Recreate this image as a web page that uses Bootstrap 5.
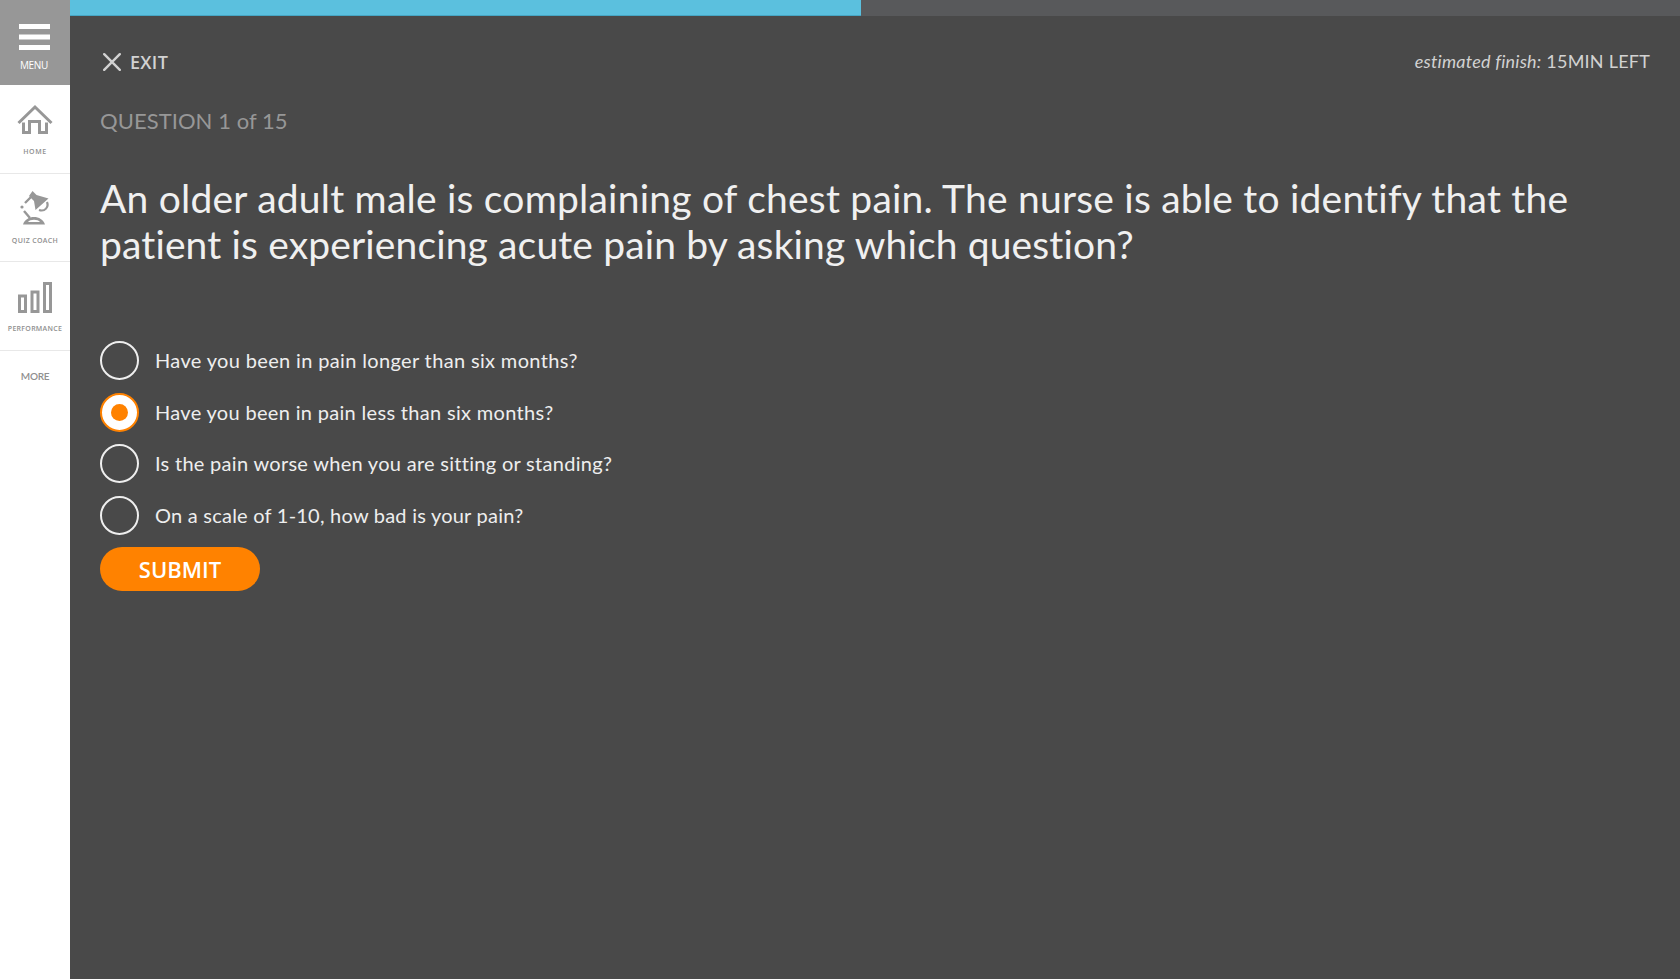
<!DOCTYPE html>
<html lang="en">
<head>
<meta charset="utf-8">
<title>Quiz Coach</title>
<link href="https://cdn.jsdelivr.net/npm/bootstrap@5.3.0/dist/css/bootstrap.min.css" rel="stylesheet">
<style>
body{font-family:"Open Sans",sans-serif;background:#494949;color:#eee;line-height:1}
.side{width:70px;background:#fff;color:#8f8f8f;font-weight:600}
.side a{color:inherit}
.side svg{display:block}
.menu-btn{height:85px;padding:24px 2px 0 0;background:#979797;color:#fff!important;font-size:10px;font-weight:400;letter-spacing:-.3px}
.menu-btn span{line-height:12px;margin-top:9px}
.tile{border-bottom:1px solid #e8e8e8;font-size:7px;white-space:nowrap}
.tile span{line-height:10px}
.more{font-family:Lato,sans-serif;font-size:10px;letter-spacing:-.3px;line-height:12px;padding-top:19px}
.prog{height:16px;border-radius:0;background:#58595b}
.prog .progress-bar{background:#5bc0de;border-bottom:1px solid #46a6c4}
.main-pane{padding:0 30px}
.topline{height:24px;margin-top:34px;color:#d2d2d2;font-size:18px}
.exit{font-weight:600;color:#d2d2d2;gap:9px;padding-left:3px;letter-spacing:.3px}
.left,.count,.ask,.opts{font-family:Lato,sans-serif;font-weight:400}
.left{letter-spacing:.22px;margin-bottom:2px}
.count{font-size:22px;line-height:30px;margin-top:32px;color:#979797;letter-spacing:.06px}
.ask{font-size:39px;line-height:46px;margin:39px 0 0;color:#f0f0f0;white-space:nowrap}
.ask .l1{letter-spacing:.22px}.ask .l2{letter-spacing:.14px}
.opts{margin-top:74px;gap:12.5px;font-size:20px}
.opt{gap:16px;height:39px;letter-spacing:.35px}
.opt .txt{margin-bottom:1px}
.opt:nth-child(3){letter-spacing:.29px}
.opt:nth-child(2){letter-spacing:.32px}
.opt:nth-child(4){letter-spacing:.23px}
.ring{width:39px;height:39px;border:2px solid #eee;border-radius:50%}
.ring.on{border-color:#ff8200;background:#fff}
.ring.on i{width:17px;height:17px;border-radius:50%;background:#ff8200}
.submit{width:160px;height:44px;margin-top:12.5px;border:0;border-radius:22px;background:#ff8200;color:#fff;font-size:22px;font-weight:600;line-height:1;padding:0}
.submit:hover{background:#ff8200;color:#fff}
</style>
<script src="https://cdn.jsdelivr.net/npm/bootstrap@5.3.0/dist/js/bootstrap.bundle.min.js"></script>
</head>
<body>
<div class="d-flex vh-100 overflow-hidden">
<nav class="side d-flex flex-column flex-shrink-0">
<a class="menu-btn d-flex flex-column align-items-center text-decoration-none"><svg width="31" height="26"><path d="M0 0h31v5H0zM0 10.500h31v5H0zM0 21h31v5H0z" fill="#fff"/></svg><span>MENU</span></a>
<a class="tile d-flex flex-column align-items-center text-decoration-none" style="height:89px;padding-top:19px"><svg width="36" height="32" fill="none" stroke="#979797" stroke-width="3"><path d="M1.500 19 18 3l16.500 16"/><path d="M6.500 18.500v10h6v-11h10v11h7v-10"/></svg><span style="margin-top:11px;letter-spacing:.6px">HOME</span></a>
<a class="tile d-flex flex-column align-items-center text-decoration-none" style="height:88px;padding-top:16px"><svg width="30" height="36" viewBox="0 0 30 36"><path d="M12.500 1l4 4 12 3.500-13 11.500-1.500-9-5-5z" fill="#979797"/><path d="M11 7 5 13M4 21l6 7" stroke="#979797" stroke-width="2.400" fill="none"/><circle cx="2" cy="17" r="1.600" fill="#979797"/><path d="M27 12c2 5-2 10-8 8" stroke="#979797" stroke-width="2.200" fill="none"/><path d="M3 34.500c3-10 19-10 22 0zM8 32h12c-2-3-10-3-12 0z" fill="#979797" fill-rule="evenodd"/></svg><span style="margin-top:10px;letter-spacing:.34px">QUIZ COACH</span></a>
<a class="tile d-flex flex-column align-items-center text-decoration-none" style="height:89px;padding-top:20px"><svg width="34" height="31" fill="none" stroke="#979797" stroke-width="3"><path d="M1.500 14h6v15.500h-6zM14 10h6v19.500h-6zM26.500 1.500h6v28h-6z"/></svg><span style="margin-top:11px;letter-spacing:.27px">PERFORMANCE</span></a>
<a class="more text-center text-decoration-none">MORE</a>
</nav>
<main class="flex-grow-1">
<div class="progress prog"><div class="progress-bar" style="width:49.130%"></div></div>
<div class="main-pane">
<div class="topline d-flex justify-content-between align-items-center"><a class="exit d-flex align-items-center text-decoration-none"><svg width="18" height="18" stroke="#d2d2d2" stroke-width="2.400" stroke-linecap="round"><path d="M1.200 1.200l15.600 15.600M16.800 1.200 1.200 16.800"/></svg><span>EXIT</span></a><div class="left"><em>estimated finish:</em> 15MIN LEFT</div></div>
<div class="count">QUESTION 1 of 15</div>
<h1 class="ask"><span class="l1">An older adult male is complaining of chest pain. The nurse is able to identify that the</span><br><span class="l2">patient is experiencing acute pain by asking which question?</span></h1>
<div class="opts d-flex flex-column">
<label class="opt d-flex align-items-center"><span class="ring"></span><span class="txt">Have you been in pain longer than six months?</span></label>
<label class="opt d-flex align-items-center"><span class="ring on d-flex align-items-center justify-content-center"><i></i></span><span class="txt">Have you been in pain less than six months?</span></label>
<label class="opt d-flex align-items-center"><span class="ring"></span><span class="txt">Is the pain worse when you are sitting or standing?</span></label>
<label class="opt d-flex align-items-center"><span class="ring"></span><span class="txt">On a scale of 1-10, how bad is your pain?</span></label>
</div>
<button class="btn submit">SUBMIT</button>
</div>
</main>
</div>
</body>
</html>
